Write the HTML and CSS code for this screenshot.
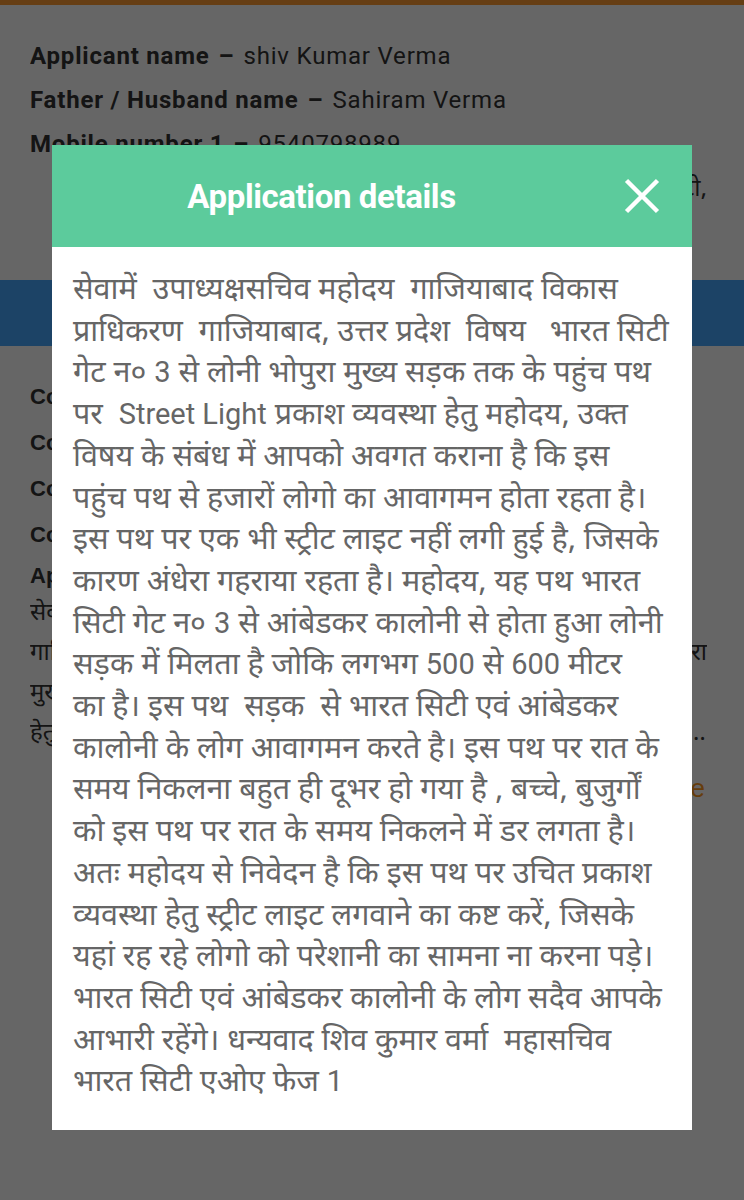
FILE: index.html
```html
<!DOCTYPE html>
<html lang="hi">
<head>
<meta charset="utf-8">
<title>Application details</title>
<link rel="stylesheet" href="styles.css">
</head>
<body>
<div class="topbar"></div>
<section class="info">
  <p class="row"><b>Applicant name</b><span class="dash">–</span>shiv Kumar Verma</p>
  <p class="row"><b>Father / Husband name</b><span class="dash">–</span>Sahiram Verma</p>
  <p class="row"><b>Mobile number 1</b><span class="dash">–</span>9540798989</p>
  <p class="row addr"><b>Address</b><span class="dash">–</span><span class="dev">भारत सिटी गेट न० 3, लोनी, गाजियाबाद, भारत सिटी,</span></p>
</section>
<div class="band"></div>
<section class="details">
  <p class="row2"><b>Complaint no.</b> - 1024587</p>
  <p class="row2"><b>Complaint type</b> - Street Light</p>
  <p class="row2"><b>Complaint date</b> - 12/03/2023</p>
  <p class="row2"><b>Complaint status</b> - Pending</p>
  <p class="row2 label"><b>Application details</b></p>
  <div class="app-text">
    <span class="ln">सेवामें  उपाध्यक्षसचिव महोदय  गाजियाबाद विकास</span>
    <span class="ln fill">गाजियाबाद, उत्तर प्रदेश  विषय  भारत सिटी गेट न० 3 से लोनी भोपुरा</span>
    <span class="ln">मुख्य सड़क तक के पहुंच पथ पर  Street Light प्रकाश</span>
    <span class="ln last">हेतु महोदय, उक्त विषय के संबंध में आपको अवगत कराना है कि इस पहुंच पथ से हजारों लोगो का आवागमन होता रहता है।</span>
  </div>
  <div class="more-row"><a class="more">Read more</a></div>
</section>

<div class="overlay"></div>

<div class="modal" role="dialog" aria-label="Application details">
  <div class="modal-head">
    <h2 class="modal-title">Application details</h2>
    <button class="close" aria-label="Close">
      <svg width="36" height="36" viewBox="0 0 36 36"><path d="M2.5 2.5 L33.5 33.5 M33.5 2.5 L2.5 33.5" stroke="#fff" stroke-width="4.5" fill="none"/></svg>
    </button>
  </div>
  <div class="modal-body">
    <p class="letter">सेवामें  उपाध्यक्षसचिव महोदय  गाजियाबाद विकास<br>प्राधिकरण  गाजियाबाद, उत्तर प्रदेश  विषय   भारत सिटी<br>गेट न० <span class="lat">3</span> से लोनी भोपुरा मुख्य सड़क तक के पहुंच पथ<br>पर  <span class="lat">Street Light</span> प्रकाश व्यवस्था हेतु महोदय, उक्त<br>विषय के संबंध में आपको अवगत कराना है कि इस<br>पहुंच पथ से हजारों लोगो का आवागमन होता रहता है।<br>इस पथ पर एक भी स्ट्रीट लाइट नहीं लगी हुई है, जिसके<br>कारण अंधेरा गहराया रहता है। महोदय, यह पथ भारत<br>सिटी गेट न० <span class="lat">3</span> से आंबेडकर कालोनी से होता हुआ लोनी<br>सड़क में मिलता है जोकि लगभग <span class="lat">500</span> से <span class="lat">600</span> मीटर<br>का है। इस पथ  सड़क  से भारत सिटी एवं आंबेडकर<br>कालोनी के लोग आवागमन करते है। इस पथ पर रात के<br>समय निकलना बहुत ही दूभर हो गया है , बच्चे, बुजुर्गों<br>को इस पथ पर रात के समय निकलने में डर लगता है।<br>अतः महोदय से निवेदन है कि इस पथ पर उचित प्रकाश<br>व्यवस्था हेतु स्ट्रीट लाइट लगवाने का कष्ट करें, जिसके<br>यहां रह रहे लोगो को परेशानी का सामना ना करना पड़े।<br>भारत सिटी एवं आंबेडकर कालोनी के लोग सदैव आपके<br>आभारी रहेंगे। धन्यवाद शिव कुमार वर्मा  महासचिव<br>भारत सिटी एओए फेज <span class="lat">1</span></p>
  </div>
</div>
</body>
</html>
```

FILE: styles.css
```css
* { box-sizing: border-box; }
html, body { margin: 0; padding: 0; }
body {
  width: 744px;
  height: 1200px;
  overflow: hidden;
  background: #fff;
  font-family: Roboto, "Noto Sans Devanagari", "Noto Sans", sans-serif;
  color: #333;
}
.topbar { height: 5px; background: #ff9b32; }
.info { padding: 29px 37px 0 30px; height: 275px; }
.row {
  margin: 0;
  font-size: 24px;
  line-height: 44px;
  white-space: nowrap;
  overflow: hidden;
  letter-spacing: 0.8px;
}
.row b { font-weight: 700; }
.dash { font-weight: 700; margin: 0 9px; }
.addr { text-align: right; }
.dev { font-family: "Noto Sans Devanagari", Roboto, sans-serif; letter-spacing: 0; }
.band { height: 66px; background: #48a9ff; }
.details { padding: 28px 37px 0 30px; font-family: "Liberation Sans", Arial, sans-serif; }
.row2 { margin: 0; font-size: 22px; line-height: 46px; white-space: nowrap; }
.row2.label { line-height: 36px; }
.app-text {
  display: flex;
  flex-direction: column;
  font-family: "Noto Sans Devanagari", "Liberation Sans", sans-serif;
  font-size: 24px;
  line-height: 40px;
}
.ln { display: block; white-space: pre; overflow: hidden; height: 40px; }
.ln.fill { text-align: justify; text-align-last: justify; white-space: normal; }
.ln.last { white-space: nowrap; text-overflow: ellipsis; }
.more-row { display: flex; justify-content: flex-end; padding-right: 2px; margin-top: 14px; }
.more { color: #ff9a1f; font-size: 26px; line-height: 40px; }

.overlay { position: fixed; inset: 0; background: rgba(0,0,0,0.6); }

.modal {
  position: fixed;
  left: 52px;
  top: 145px;
  width: 640px;
  background: #fff;
}
.modal-head {
  height: 102px;
  background: #5ccb9c;
  display: flex;
  align-items: center;
  padding: 0 32px 0 0;
}
.modal-title {
  flex: 1;
  margin: 0;
  text-align: center;
  color: #fff;
  font-family: Roboto, "Liberation Sans", sans-serif;
  font-weight: 700;
  font-size: 33px;
  letter-spacing: -0.4px;
}
.close {
  background: none;
  border: 0;
  padding: 0;
  width: 36px;
  height: 36px;
  display: flex;
  margin-left: 33px;
}
.modal-body { padding: 24px 10px 25px 21px; }
.letter {
  margin: 0;
  color: #666;
  font-family: "Noto Sans Devanagari", Roboto, sans-serif;
  font-size: 30.5px;
  line-height: 41.7px;
  white-space: pre;
}
.lat { font-family: Roboto, sans-serif; font-size: 29px; line-height: 0; }
```
